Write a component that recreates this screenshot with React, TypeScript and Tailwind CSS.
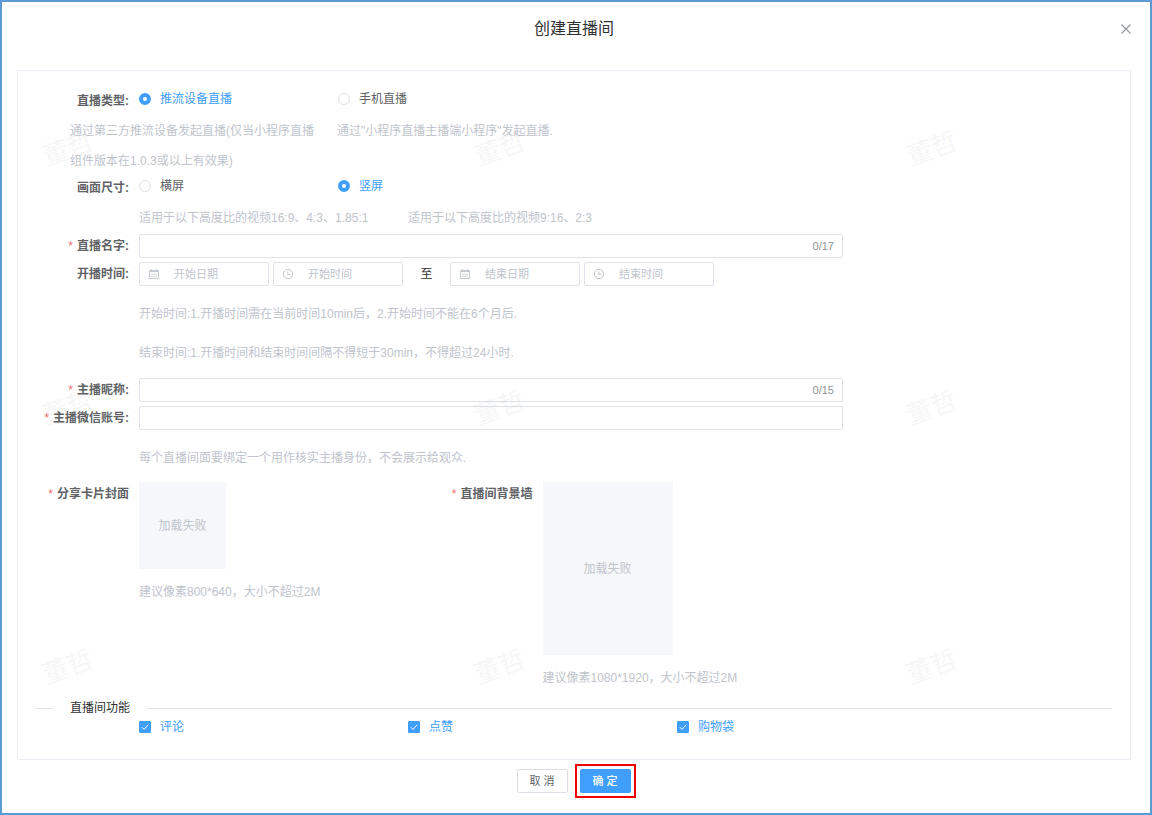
import type { ReactNode } from "react"

const WATERMARKS = Array.from({ length: 9 }, (_, i) => i)

function Watermark() {
    return (
        <div
            aria-hidden="true"
            className="pointer-events-none absolute inset-0 grid grid-cols-[repeat(3,432px)] auto-rows-[259px] justify-start overflow-hidden pt-[131px] pl-10"
        >
            {WATERMARKS.map((i) => (
                <span key={i} className="h-8 w-[52px] -rotate-20 text-[26px] leading-8 font-medium whitespace-nowrap text-black/5">
                    董哲
                </span>
            ))}
        </div>
    )
}

function FieldLabel({ text, htmlFor, required }: { text: string; htmlFor?: string; required?: boolean }) {
    return (
        <label htmlFor={htmlFor} className="w-[103px] shrink-0 pr-2.5 text-right leading-6 font-bold whitespace-nowrap">
            {required && <span className="mr-1 font-normal text-[#f56c6c]">*</span>}
            {text}
        </label>
    )
}

function Radio({ name, text, checked }: { name: string; text: string; checked?: boolean }) {
    return (
        <label className="flex h-5 w-[199px] items-center gap-[9px] has-checked:text-[#409eff]">
            <input
                type="radio"
                name={name}
                defaultChecked={checked}
                className="size-3 appearance-none rounded-full border border-[#dcdfe6] bg-white checked:border-4 checked:border-[#409eff]"
            />
            {text}
        </label>
    )
}

function Checkbox({ text }: { text: string }) {
    return (
        <label className="flex h-[18px] items-center gap-[9px] has-checked:text-[#409eff]">
            <span className="relative size-3">
                <input
                    type="checkbox"
                    defaultChecked
                    className="block size-3 appearance-none rounded-[1px] border border-[#dcdfe6] checked:border-[#409eff] checked:bg-[#409eff]"
                />
                <svg viewBox="0 0 12 12" className="pointer-events-none absolute inset-0 size-3" fill="none" stroke="white">
                    <path d="M2.8 6.2 5 8.4 9.2 3.8" />
                </svg>
            </span>
            {text}
        </label>
    )
}

function TextField({ id, count }: { id: string; count?: string }) {
    return (
        <div className="flex h-6 flex-1 items-center rounded-xs border border-[#dfe2ea] pr-2">
            <input id={id} type="text" className="h-full min-w-0 flex-1 px-3 outline-none" />
            {count && <span className="text-[11px] text-[#909399]">{count}</span>}
        </div>
    )
}

function CalendarIcon() {
    return (
        <svg viewBox="0 0 12 12" className="size-3 shrink-0" fill="none" stroke="#c0c4cc">
            <path d="M1.5 2.5h9v8h-9z" strokeWidth="0.9" />
            <path d="M1.5 3.6h9M3.5 1.2v2M8.5 1.2v2" />
            <path d="M3 6.3h6M3 8.4h6" strokeWidth="0.7" />
        </svg>
    )
}

function ClockIcon() {
    return (
        <svg viewBox="0 0 12 12" className="size-3 shrink-0" fill="none" stroke="#c0c4cc">
            <circle cx="6" cy="6" r="4.6" />
            <path d="M5.8 3.4v3h2.6" />
        </svg>
    )
}

function PickerField({ id, placeholder, icon }: { id?: string; placeholder: string; icon: ReactNode }) {
    return (
        <div className="flex h-6 w-[130px] items-center gap-3.5 rounded-xs border border-[#dfe2ea] pl-2">
            {icon}
            <input
                id={id}
                type="text"
                aria-label={placeholder}
                placeholder={placeholder}
                className="h-full min-w-0 flex-1 text-[11px] outline-none placeholder:text-[#c0c4cc]"
            />
        </div>
    )
}

function Hint({ children }: { children: ReactNode }) {
    return <p className="ml-[103px] leading-[39px] text-[#c0c4cc]">{children}</p>
}

export default function App() {
    return (
        <div className="relative min-h-screen border-2 border-[#5b9bd5] bg-white pr-[19px] pb-3.5 pl-[15px] font-['Liberation_Sans','Noto_Sans_CJK_SC',sans-serif] text-xs text-[#606266]">
            <header className="grid h-[54px] grid-cols-[1fr_auto_1fr] items-center">
                <h1 className="col-start-2 text-base text-[#303133]">创建直播间</h1>
                <button type="button" aria-label="关闭" className="justify-self-end">
                    <svg viewBox="0 0 10 10" className="size-2.5" fill="none" stroke="#909399" strokeWidth="1.1">
                        <path d="M0.5 0.5l9 9M9.5 0.5l-9 9" />
                    </svg>
                </button>
            </header>

            <form id="room-form" className="mt-3.5 border border-[#ebeef5] px-[18px] pt-[18px] pb-[23px]">
                <div className="flex h-[27px]">
                    <FieldLabel text="直播类型:" />
                    <Radio name="type" text="推流设备直播" checked />
                    <Radio name="type" text="手机直播" />
                </div>
                <div className="ml-[34px] flex gap-[19px] leading-[30px] text-[#c0c4cc]">
                    <p className="w-[248px]">通过第三方推流设备发起直播(仅当小程序直播组件版本在1.0.3或以上有效果)</p>
                    <p>通过"小程序直播主播端小程序"发起直播.</p>
                </div>
                <div className="flex h-[27px]">
                    <FieldLabel text="画面尺寸:" />
                    <Radio name="size" text="横屏" />
                    <Radio name="size" text="竖屏" checked />
                </div>
                <div className="ml-[103px] flex leading-[30px] text-[#c0c4cc]">
                    <p className="w-[269px]">适用于以下高度比的视频16:9、4:3、1.85:1</p>
                    <p>适用于以下高度比的视频9:16、2:3</p>
                </div>

                <div className="mt-px flex w-3/4">
                    <FieldLabel htmlFor="room-name" text="直播名字:" required />
                    <TextField id="room-name" count="0/17" />
                </div>
                <div className="mt-1 flex">
                    <FieldLabel htmlFor="start-date" text="开播时间:" />
                    <div className="flex items-center gap-1">
                        <PickerField id="start-date" placeholder="开始日期" icon={<CalendarIcon />} />
                        <PickerField placeholder="开始时间" icon={<ClockIcon />} />
                    </div>
                    <span className="w-[47px] text-center leading-6 text-[#303133]">至</span>
                    <div className="flex items-center gap-1">
                        <PickerField placeholder="结束日期" icon={<CalendarIcon />} />
                        <PickerField placeholder="结束时间" icon={<ClockIcon />} />
                    </div>
                </div>
                <div className="mt-[9px] mb-[5px]">
                    <Hint>开始时间:1.开播时间需在当前时间10min后，2.开始时间不能在6个月后.</Hint>
                    <Hint>结束时间:1.开播时间和结束时间间隔不得短于30min，不得超过24小时.</Hint>
                </div>

                <div className="flex w-3/4">
                    <FieldLabel htmlFor="nickname" text="主播昵称:" required />
                    <TextField id="nickname" count="0/15" />
                </div>
                <div className="mt-1 flex w-3/4">
                    <FieldLabel htmlFor="wechat" text="主播微信账号:" required />
                    <TextField id="wechat" />
                </div>
                <div className="mt-[9px] mb-1">
                    <Hint>每个直播间面要绑定一个用作核实主播身份，不会展示给观众.</Hint>
                </div>

                <div className="flex">
                    <div className="flex w-3/8">
                        <FieldLabel text="分享卡片封面" required />
                        <div className="whitespace-nowrap text-[#c0c4cc]">
                            <div className="flex size-[87px] items-center justify-center bg-[#f5f7fa]">加载失败</div>
                            <p className="mt-2 leading-[30px]">建议像素800*640，大小不超过2M</p>
                        </div>
                    </div>
                    <div className="flex">
                        <FieldLabel text="直播间背景墙" required />
                        <div className="whitespace-nowrap text-[#c0c4cc]">
                            <div className="flex h-[173px] w-[130px] items-center justify-center bg-[#f5f7fa]">加载失败</div>
                            <p className="mt-2 leading-[30px]">建议像素1080*1920，大小不超过2M</p>
                        </div>
                    </div>
                </div>

                <div className="mt-[5px] flex h-5 items-center gap-4 text-[#303133]">
                    <span className="h-px w-[18px] bg-[#dfe2ea]" />
                    <h2>直播间功能</h2>
                    <span className="h-px flex-1 bg-[#dfe2ea]" />
                </div>
                <div className="ml-[103px] grid grid-cols-[269px_269px_auto] justify-start">
                    <Checkbox text="评论" />
                    <Checkbox text="点赞" />
                    <Checkbox text="购物袋" />
                </div>
            </form>

            <footer className="mt-1 flex items-center justify-center gap-[7px] pl-1 text-[11px]">
                <button type="button" className="h-6 w-[51px] rounded-xs border border-[#dcdfe6] bg-white">
                    取 消
                </button>
                <div className="border-2 border-[#f00000] p-[3px]">
                    <button type="submit" form="room-form" className="block h-6 w-[51px] rounded-xs bg-[#409eff] font-medium text-white">
                        确 定
                    </button>
                </div>
            </footer>

            <Watermark />
        </div>
    )
}
